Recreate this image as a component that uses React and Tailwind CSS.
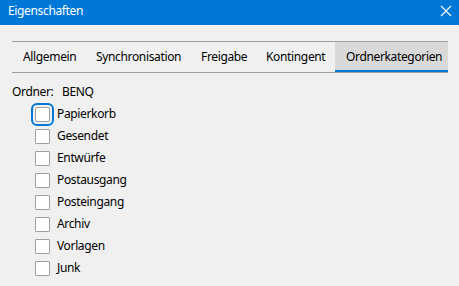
export default function App() {
  const tabs = [
    ["Allgemein", "w-[73px]"],
    ["Synchronisation", "w-[105px]"],
    ["Freigabe", "w-[65px]"],
    ["Kontingent", "w-[80px]"],
  ];
  const items = ["Papierkorb", "Gesendet", "Entwürfe", "Postausgang", "Posteingang", "Archiv", "Vorlagen", "Junk"];
  return (
    <div className="w-[459px] h-[286px] bg-[#f0f0f0] overflow-hidden text-[12px] tracking-[-0.35px] text-black" style={{ fontFamily: '"Noto Sans", sans-serif' }}>
      <div className="h-[25px] bg-[#0078d7] flex items-center justify-between pl-[8px] pr-[7px] text-white">
        <span className="leading-none -mt-[3px]">Eigenschaften</span>
        <svg width="12" height="12" viewBox="0 0 12 12" className="-mt-[3px]">
          <path d="M1 1 L11 11 M11 1 L1 11" stroke="white" strokeWidth="1.1" />
        </svg>
      </div>
      <div className="mt-[16px] ml-[12px] w-[436px] h-[32px] border-y border-[#a0a0a0] flex">
        {tabs.map(([t, w]) => (
          <div key={t} className={`${w} h-full flex items-center pl-[11px] whitespace-nowrap`}>{t}</div>
        ))}
        <div className="flex-1 h-full bg-[#d9d9d9] border-b-2 border-[#0078d7] flex items-center pl-[11px] pt-[2px] whitespace-nowrap">Ordnerkategorien</div>
      </div>
      <div className="ml-[12px] mt-[11px] flex h-[16px] items-center">
        <span className="w-[50px]">Ordner:</span>
        <span>BENQ</span>
      </div>
      <div className="ml-[35px] mt-[3px] flex flex-col">
        {items.map((it, i) => (
          <div key={it} className="h-[22px] flex items-center">
            <div className={`w-[15px] h-[15px] bg-white border border-[#a0a0a0] rounded-[1px] ${i === 0 ? "outline-2 outline-[#0078d7] outline-offset-[2px] rounded-[2px]" : ""}`}></div>
            <span className="ml-[7px] -mt-[1px]">{it}</span>
          </div>
        ))}
      </div>
    </div>
  );
}
